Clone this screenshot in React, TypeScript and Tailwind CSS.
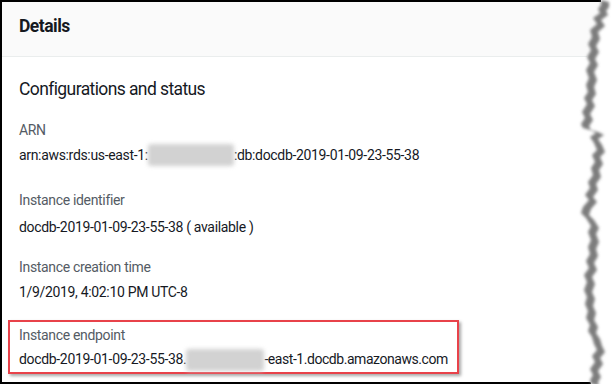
import React from "react";

function TornEdge() {
  const pts: [number, number][] = [
    [601, 0], [601, 5], [598, 9], [600, 13], [593, 18], [597, 24], [590, 30], [592, 37], [588, 44],
    [591, 50], [587, 57], [590, 63], [586, 70], [589, 78], [586, 85], [588, 92], [584, 98], [587, 104],
    [582, 112], [585, 118], [581, 124], [583, 128], [590, 130], [596, 133], [590, 137], [594, 143],
    [597, 150], [592, 155], [595, 162], [591, 168], [593, 175], [588, 182], [590, 188], [585, 195],
    [589, 200], [583, 207], [581, 213], [586, 218], [591, 226], [588, 232], [591, 240], [588, 247],
    [590, 254], [586, 261], [589, 268], [584, 275], [587, 282], [584, 290], [587, 297], [585, 304],
    [588, 311], [586, 318], [590, 325], [588, 331], [592, 337], [594, 344], [597, 350], [592, 356],
    [595, 362], [590, 369], [593, 375], [590, 380], [591, 384],
  ];
  const line = pts.map((p) => `${p[0]},${p[1]}`).join(" ");
  const white = `${line} 612,384 612,0`;
  const shadow = line + " " + [...pts].reverse().map((p) => `${p[0] + 8},${p[1] + 2}`).join(" ");
  return (
    <svg className="absolute left-0 top-0" width="612" height="384" viewBox="0 0 612 384">
      <defs>
        <filter id="bl" x="-20%" y="-5%" width="140%" height="110%">
          <feGaussianBlur stdDeviation="1.5" />
        </filter>
      </defs>
      <polygon points={white} fill="#ffffff" />
      <polygon points={shadow} fill="#7d7d7d" filter="url(#bl)" />
    </svg>
  );
}

function Blur({ w, h }: { w: number; h: number }) {
  return (
    <span
      className="inline-block shrink-0 align-middle rounded-[3px] bg-[#d2d2d2] blur-[2px]"
      style={{ width: w, height: h }}
    />
  );
}

const lbl = "text-[14px] leading-[24px] tracking-[-0.33px] text-[#545b64] whitespace-nowrap";
const val = "text-[14px] leading-[26px] tracking-[-0.33px] text-[#16191f] whitespace-nowrap";

export default function App() {
  return (
    <div
      className="relative w-[612px] h-[384px] overflow-hidden bg-white text-[#16191f]"
      style={{ fontFamily: "Roboto, 'Noto Sans', Arial, sans-serif" }}
    >
      <div className="w-[612px] h-[384px] border-t-2 border-l-2 border-b-2 border-black flex flex-col">
        <div className="shrink-0 h-[55px] bg-[#fafafa] border-b border-[#eaeded] pl-[17px] pt-[12px]">
          <span className="text-[17.5px] font-bold leading-[24px] tracking-[-0.5px] text-[#16191f]">Details</span>
        </div>
        <div className="pl-[17px] pt-[18px] flex flex-col">
          <div className="text-[17.5px] leading-[28px] tracking-[-0.6px]">Configurations and status</div>
          <div className={`mt-[15px] ${lbl}`}>ARN</div>
          <div className={`${val} flex items-center`}>
            <span>arn:aws:rds:us-east-1:</span>
            <Blur w={86} h={22} />
            <span>:db:docdb-2019-01-09-23-55-38</span>
          </div>
          <div className={`mt-[20px] ${lbl}`}>Instance identifier</div>
          <div className={`mt-[2px] ${val}`}>docdb-2019-01-09-23-55-38 ( available )</div>
          <div className={`mt-[15px] ${lbl}`}>Instance creation time</div>
          <div className={val}>1/9/2019, 4:02:10 PM UTC-8</div>
          <div className="mt-[15px] -ml-[11px] w-[451px] border-2 border-[#e8424a] pl-[9px] pt-[1px] shadow-[2px_2px_3px_rgba(0,0,0,0.35)]">
            <div className={lbl}>Instance endpoint</div>
            <div className="text-[14px] leading-[25px] tracking-[-0.33px] text-[#16191f] whitespace-nowrap flex items-center">
              <span>docdb-2019-01-09-23-55-38.</span>
              <Blur w={78} h={22} />
              <span className="tracking-[-0.45px]">-east-1.docdb.amazonaws.com</span>
            </div>
          </div>
        </div>
      </div>
      <TornEdge />
    </div>
  );
}
